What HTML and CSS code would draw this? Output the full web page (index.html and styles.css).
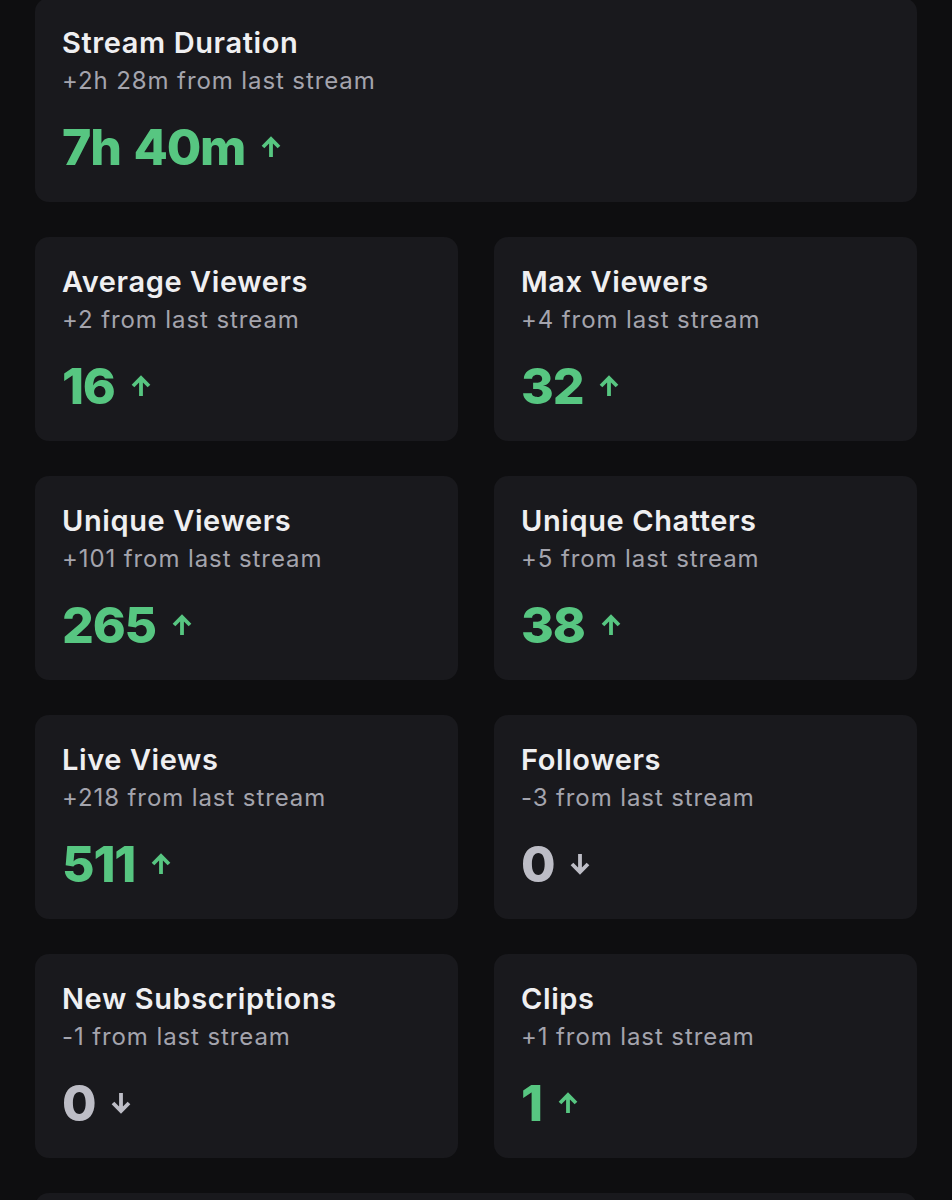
FILE: index.html
```html
<!DOCTYPE html>
<html lang="en">

<head>
    <meta charset="UTF-8">
    <meta name="viewport" content="width=device-width, initial-scale=1.0">
    <title>Stream Summary</title>
    <link rel="stylesheet" href="styles.css">
</head>

<body>
    <main class="stats">
        <div class="card wide">
            <h2>Stream Duration</h2>
            <p class="delta">+2h 28m from last stream</p>
            <div class="value up">7h 40m
                <svg class="arrow" viewBox="0 0 22 22"><path d="M11 21V3M3 11l8-8 8 8" /></svg>
            </div>
        </div>

        <div class="card">
            <h2>Average Viewers</h2>
            <p class="delta">+2 from last stream</p>
            <div class="value up">16
                <svg class="arrow" viewBox="0 0 22 22"><path d="M11 21V3M3 11l8-8 8 8" /></svg>
            </div>
        </div>
        <div class="card">
            <h2>Max Viewers</h2>
            <p class="delta">+4 from last stream</p>
            <div class="value up">32
                <svg class="arrow" viewBox="0 0 22 22"><path d="M11 21V3M3 11l8-8 8 8" /></svg>
            </div>
        </div>

        <div class="card">
            <h2>Unique Viewers</h2>
            <p class="delta">+101 from last stream</p>
            <div class="value up">265
                <svg class="arrow" viewBox="0 0 22 22"><path d="M11 21V3M3 11l8-8 8 8" /></svg>
            </div>
        </div>
        <div class="card">
            <h2>Unique Chatters</h2>
            <p class="delta">+5 from last stream</p>
            <div class="value up">38
                <svg class="arrow" viewBox="0 0 22 22"><path d="M11 21V3M3 11l8-8 8 8" /></svg>
            </div>
        </div>

        <div class="card">
            <h2>Live Views</h2>
            <p class="delta">+218 from last stream</p>
            <div class="value up">511
                <svg class="arrow" viewBox="0 0 22 22"><path d="M11 21V3M3 11l8-8 8 8" /></svg>
            </div>
        </div>
        <div class="card">
            <h2>Followers</h2>
            <p class="delta">-3 from last stream</p>
            <div class="value down">0
                <svg class="arrow" viewBox="0 0 22 22"><path d="M11 1v18M3 11l8 8 8-8" /></svg>
            </div>
        </div>

        <div class="card">
            <h2>New Subscriptions</h2>
            <p class="delta">-1 from last stream</p>
            <div class="value down">0
                <svg class="arrow" viewBox="0 0 22 22"><path d="M11 1v18M3 11l8 8 8-8" /></svg>
            </div>
        </div>
        <div class="card">
            <h2>Clips</h2>
            <p class="delta">+1 from last stream</p>
            <div class="value up">1
                <svg class="arrow" viewBox="0 0 22 22"><path d="M11 21V3M3 11l8-8 8 8" /></svg>
            </div>
        </div>

        <!-- next section, only its top edge is in view -->
        <div class="card wide"></div>
    </main>
</body>

</html>
```

FILE: styles.css
```css
:root {
    --page-bg: #0e0e10;
    --card-bg: #19191d;
    --title-color: #efeff1;
    --muted-color: #a4a4ad;
    --up-color: #57c681;
    --down-color: #bdbdc6;
}

html,
body {
    margin: 0;
    padding: 0;
    background-color: var(--page-bg);
    font-family: Inter, "Noto Sans", sans-serif;
}

.stats {
    display: grid;
    grid-template-columns: 1fr 1fr;
    gap: 35px 36px;
    padding: 0 35px 40px;
    margin-top: -2px;
}

.card {
    background-color: var(--card-bg);
    border-radius: 14px;
    padding: 28px 27px 30px;
    height: 204px;
    box-sizing: border-box;
}

.card.wide {
    grid-column: 1 / -1;
}

.card h2 {
    margin: 0;
    font-size: 29px;
    line-height: 34px;
    font-weight: 600;
    letter-spacing: 0.6px;
    color: var(--title-color);
}

.delta {
    margin: 7px 0 0;
    font-size: 24px;
    line-height: 28px;
    letter-spacing: 0.9px;
    color: var(--muted-color);
}

.value {
    display: flex;
    align-items: center;
    gap: 15px;
    margin-top: 27px;
    font-size: 50px;
    line-height: 50px;
    font-weight: 800;
    letter-spacing: -1.2px;
    word-spacing: 3px;
}

.value.up {
    color: var(--up-color);
}

.value.down {
    color: var(--down-color);
}

.arrow {
    width: 22px;
    height: 22px;
    fill: none;
    stroke: currentColor;
    stroke-width: 3.8;
}
```
